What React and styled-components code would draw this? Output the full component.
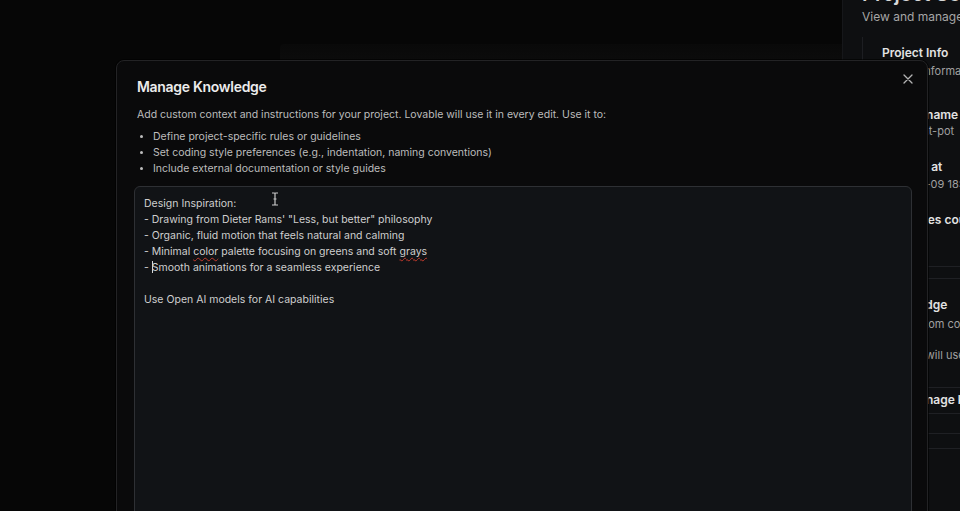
import React from 'react';
import styled, { createGlobalStyle } from 'styled-components';

const GlobalStyle = createGlobalStyle`
  html, body {
    margin: 0;
    background: #060606;
    font-family: Inter, 'Noto Sans', sans-serif;
    -webkit-font-smoothing: antialiased;
  }
`;

const Page = styled.div`
  position: relative;
  display: flex;
  width: 100%;
  height: 511px;
  overflow: hidden;
  background: #060606;
`;

const Backdrop = styled.div`
  flex: 1;
  padding-top: 44px;
`;

const FaintBand = styled.div`
  margin-left: 280px;
  height: 18px;
  background: linear-gradient(180deg, #090909 0%, #0c0c0c 100%);
  border-radius: 4px 0 0 0;
`;

const SettingsPanel = styled.aside`
  width: 118px;
  box-sizing: border-box;
  flex-shrink: 0;
  background: #0e0f11;
  border-left: 1px solid #16171a;
  padding-left: 19px;
  white-space: nowrap;
  overflow: hidden;
`;

const PanelTitle = styled.h2`
  margin: -19px 0 0;
  font-size: 20px;
  font-weight: 600;
  line-height: 26px;
  color: #d8d8d8;
`;

const PanelSub = styled.p`
  margin: 2px 0 0;
  font-size: 12px;
  line-height: 16px;
  color: #a6a6a6;
`;

const PanelCard = styled.div`
  margin-top: 12px;
  border-left: 1px solid #1d1e22;
  padding: 8px 0 0 19px;
  display: flex;
  flex-direction: column;
`;

const FieldLabel = styled.div`
  font-size: 12px;
  font-weight: 600;
  line-height: 16px;
  color: #e2e2e2;
  margin-top: ${(p) => p.$gap || 0}px;
  padding-left: ${(p) => p.$indent || 0}px;
`;

const FieldValue = styled.div`
  font-size: 11px;
  line-height: 16px;
  color: #a0a0a0;
  margin-top: ${(p) => p.$gap ?? 1}px;
`;

const Divider = styled.div`
  height: 1px;
  background: #1f2024;
  margin: ${(p) => p.$m || '0'};
  margin-left: -20px;
`;

const Dialog = styled.section`
  position: absolute;
  left: 116px;
  top: 60px;
  width: 812px;
  height: 480px;
  box-sizing: border-box;
  background: #0a0a0b;
  border: 1px solid #232325;
  border-radius: 8px;
  padding: 16px 15px 0 17px;
  box-shadow: 0 0 0 1px rgba(0, 0, 0, 0.6);
`;

const CloseButton = styled.button`
  position: absolute;
  top: 11px;
  right: 12px;
  width: 14px;
  height: 14px;
  padding: 0;
  border: 0;
  background: none;
  color: #b4b4b4;
  display: flex;
  align-items: center;
  justify-content: center;
`;

const Header = styled.header`
  padding-left: 3px;
`;

const Title = styled.h1`
  margin: 0;
  font-size: 14px;
  font-weight: 600;
  line-height: 20px;
  letter-spacing: -0.3px;
  color: #ececec;
`;

const Description = styled.p`
  margin: 10px 0 0;
  font-size: 10.5px;
  line-height: 16px;
  color: #bdbdbd;
`;

const BulletList = styled.ul`
  margin: 6px 0 0;
  padding-left: 16px;
  font-size: 10.5px;
  line-height: 16px;
  color: #bdbdbd;

  li::marker {
    font-size: 9px;
  }
`;

const Editor = styled.div`
  position: relative;
  margin-top: 9px;
  height: 340px;
  box-sizing: border-box;
  background: #111316;
  border: 1px solid #2e3034;
  border-radius: 6px;
  padding: 9px 9px;
  font-size: 10.5px;
  line-height: 16px;
  color: #cfcfcf;
  white-space: pre-wrap;
`;

const Line = styled.div`
  min-height: 16px;
`;

const Misspelled = styled.span`
  text-decoration: underline wavy #c0392b;
  text-decoration-thickness: 1px;
  text-underline-offset: 2px;
`;

const Caret = styled.span`
  display: inline-block;
  width: 1px;
  height: 12px;
  background: #d8d8d8;
  vertical-align: -2px;
  margin-right: -1px;
`;

const IBeam = styled.svg`
  position: absolute;
  left: 136px;
  top: 5px;
`;

const rightFields = [
  { label: 'Project Info', value: 'Project information', gap: 0, vgap: 2 },
  { label: 'Project name', value: 'intelligent-pot', gap: 28, vgap: 0 },
  { label: 'Created at', value: '2025-01-09 18:14', gap: 20, vgap: 1 },
  { label: 'Messages count', value: '', gap: 20 },
];

export default function App() {
  return (
    <>
      <GlobalStyle />
      <Page>
        <Backdrop>
          <FaintBand />
        </Backdrop>
        <SettingsPanel>
          <PanelTitle>Project Settings</PanelTitle>
          <PanelSub>View and manage your project</PanelSub>
          <PanelCard>
            {rightFields.map((f) => (
              <React.Fragment key={f.label}>
                <FieldLabel $gap={f.gap}>{f.label}</FieldLabel>
                {f.value && <FieldValue $gap={f.vgap}>{f.value}</FieldValue>}
              </React.Fragment>
            ))}
            <Divider $m="38px 0 0" />
            <Divider $m="11px 0 0" />
            <FieldLabel $gap={18}>Knowledge</FieldLabel>
            <FieldValue $gap={3}>Add custom context</FieldValue>
            <FieldValue $gap={15}>Lovable will use it</FieldValue>
            <Divider $m="24px 0 0" />
            <FieldLabel $gap={4} $indent={26}>Manage knowledge</FieldLabel>
            <Divider $m="5px 0 0" />
            <Divider $m="19px 0 0" />
            <Divider $m="14px 0 0" />
          </PanelCard>
        </SettingsPanel>

        <Dialog role="dialog" aria-label="Manage Knowledge">
          <CloseButton aria-label="Close">
            <svg width="10" height="10" viewBox="0 0 10 10" fill="none">
              <path d="M1 1L9 9M9 1L1 9" stroke="currentColor" strokeWidth="1.3" strokeLinecap="round" />
            </svg>
          </CloseButton>
          <Header>
            <Title>Manage Knowledge</Title>
            <Description>
              Add custom context and instructions for your project. Lovable will use it in every edit. Use it to:
            </Description>
            <BulletList>
              <li>Define project-specific rules or guidelines</li>
              <li>Set coding style preferences (e.g., indentation, naming conventions)</li>
              <li>Include external documentation or style guides</li>
            </BulletList>
          </Header>
          <Editor>
            <Line>Design Inspiration:</Line>
            <Line>- Drawing from Dieter Rams' "Less, but better" philosophy</Line>
            <Line>- Organic, fluid motion that feels natural and calming</Line>
            <Line>
              - Minimal <Misspelled>color</Misspelled> palette focusing on greens and soft{' '}
              <Misspelled>grays</Misspelled>
            </Line>
            <Line>
              - <Caret />Smooth animations for a seamless experience
            </Line>
            <Line />
            <Line>Use Open AI models for AI capabilities</Line>
            <IBeam width="8" height="14" viewBox="0 0 8 14" fill="none">
              <path d="M1 1h2.2c.5 0 .8.3.8.8v10.4c0 .5.3.8.8.8H7M7 1H4.8c-.5 0-.8.3-.8.8M4 12.2c0 .5-.3.8-.8.8H1M2.5 7h3" stroke="#c9c9c9" strokeWidth="1.2" />
            </IBeam>
          </Editor>
        </Dialog>
      </Page>
    </>
  );
}
